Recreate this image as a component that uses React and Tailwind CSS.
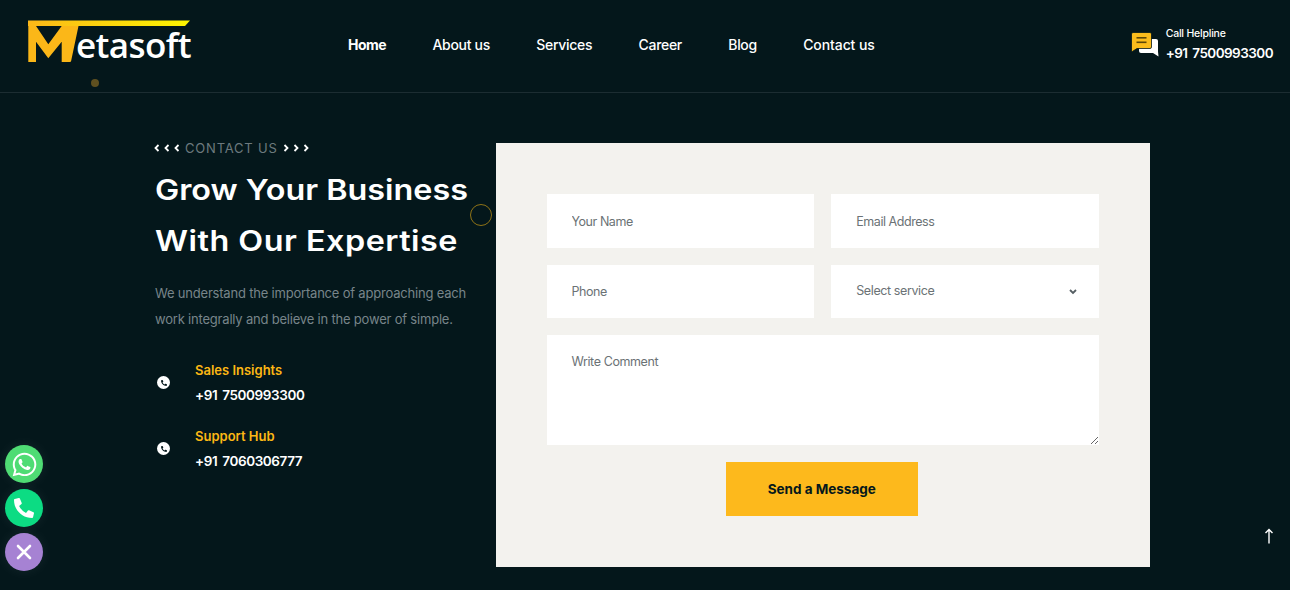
import React from "react";
import { FaWhatsapp, FaPhoneAlt } from "react-icons/fa";

const Logo = () => (
  <div className="flex items-start w-[164px] h-[44px] relative">
    <svg width="164" height="44" viewBox="0 0 164 44" className="absolute left-0 top-0">
      <defs>
        <linearGradient id="lg" x1="0" x2="1" y1="0" y2="0">
          <stop offset="0" stopColor="#fbb718" />
          <stop offset="1" stopColor="#fdf500" />
        </linearGradient>
      </defs>
      <polygon points="1,0.5 163,0.5 158,6 1,6" fill="url(#lg)" />
      <polygon points="1.3,6 9,6 21.3,24.3 34.7,6 51.5,6 44,41.5 43,42 34.7,42 34.7,21.7 21.3,38.3 9,21.7 9,42 1.3,42" fill="#fbb718" />
    </svg>
    <span className="absolute left-[49px] top-[1px] font-['Open_Sans',sans-serif] font-semibold text-white text-[35px] leading-[48px] tracking-[-0.6px]">etasoft</span>
  </div>
);

const ChatIcon = () => (
  <svg width="28" height="25" viewBox="0 0 28 25">
    <path d="M8 7h17a2 2 0 0 1 2 2v10.5l.5 5-5.5-3.5H10a2 2 0 0 1-2-2z" fill="#fff" />
    <path d="M2 0.5h17a1.5 1.5 0 0 1 1.5 1.5v13a1.5 1.5 0 0 1-1.5 1.5H6l-5.5 3.5V2A1.5 1.5 0 0 1 2 0.5z" fill="#fbbc1c" stroke="#03161c" strokeWidth="0.8" />
    <rect x="5.5" y="5" width="10" height="1.6" fill="#5c4708" />
    <rect x="5.5" y="9.5" width="10" height="1.6" fill="#5c4708" />
  </svg>
);

const Chevrons = ({ right }) => (
  <svg width="26" height="8" viewBox="0 0 26 8" className="shrink-0">
    {[0, 10, 20].map((x) => (
      <path
        key={x}
        d={right ? `M${x + 1.5} 1L${x + 4.5} 4L${x + 1.5} 7` : `M${x + 4.5} 1L${x + 1.5} 4L${x + 4.5} 7`}
        stroke="#fff"
        strokeWidth="1.8"
        fill="none"
      />
    ))}
  </svg>
);

const Contact = ({ label, phone }) => (
  <div className="flex items-center">
    <span className="ml-[2px] w-[13px] h-[13px] rounded-full bg-white flex items-center justify-center mt-[1px]">
      <FaPhoneAlt className="text-[#04171b] w-[6px] h-[6px]" />
    </span>
    <div className="ml-[25px]">
      <div className="text-[#fdb714] text-[13px] font-semibold leading-[26px]">{label}</div>
      <div className="text-white text-[13.5px] font-semibold leading-[24px] tracking-[-0.4px] [word-spacing:2px]">{phone}</div>
    </div>
  </div>
);

const inputCls = "w-full h-[53.5px] bg-white px-[25px] pt-[1px] text-[12.5px] tracking-[-0.45px] text-[#555e63] placeholder:text-[#6b7275] outline-none";

export default function App() {
  return (
    <div className="relative w-[1290px] h-[590px] overflow-hidden bg-[#04171b] font-['Inter',sans-serif]">
      <header className="h-[93px] border-b border-[#1c2d32] flex items-start">
        <div className="ml-[27px] mt-[20px]"><Logo /></div>
        <nav className="absolute left-[348px] top-[34px] flex gap-[46.3px] text-[14px] font-medium text-white leading-[21px] tracking-[-0.3px]">
          <a className="font-bold tracking-[-0.5px]">Home</a>
          <a>About us</a>
          <a>Services</a>
          <a>Career</a>
          <a>Blog</a>
          <a className="tracking-[-0.1px]">Contact us</a>
        </nav>
        <div className="ml-auto mr-[17px] mt-[25px] flex items-center">
          <ChatIcon />
          <div className="ml-[7px]">
            <div className="text-white text-[10.5px] font-medium leading-[17px] tracking-[-0.2px]">Call Helpline</div>
            <div className="text-white text-[13.5px] font-semibold leading-[22px] tracking-[-0.55px] [word-spacing:2px]">+91 7500993300</div>
          </div>
        </div>
      </header>

      <main className="flex pl-[155px] pt-[50px]">
        <section className="w-[340.5px]">
          <div className="flex items-center text-[13px] text-[#6d7a7e] tracking-[0.8px] leading-[10px] h-[10px]">
            <span className="-ml-[1px]"><Chevrons /></span>
            <span className="ml-[5px]">CONTACT US</span>
            <span className="ml-[5px]"><Chevrons right /></span>
          </div>
          <h1 className="mt-[12px] text-white font-semibold text-[28px] leading-[51px] origin-left scale-x-[1.155] w-[280px]">
            Grow Your Business<br /><span className="tracking-[0.43px]">With Our Expertise</span>
          </h1>
          <p className="mt-[13px] text-[#78858a] text-[13px] leading-[26px] tracking-[-0.2px] w-[325px]">
            We understand the importance of approaching each work integrally and believe in the power of simple.
          </p>
          <div className="mt-[25px] flex flex-col gap-[16px]">
            <Contact label="Sales Insights" phone="+91 7500993300" />
            <Contact label="Support Hub" phone="+91 7060306777" />
          </div>
        </section>

        <section className="w-[654.5px] h-[424px] bg-[#f3f2ee] p-[51px]">
          <div className="grid grid-cols-2 gap-[17px]">
            <input className={inputCls} placeholder="Your Name" />
            <input className={inputCls} placeholder="Email Address" />
            <input className={inputCls} placeholder="Phone" />
            <div className="relative">
              <select className="appearance-none w-full h-[53.5px] bg-white pl-[25px] pr-[16px] pt-[1px] text-[12.5px] tracking-[-0.4px] text-[#6b7275] outline-none" defaultValue="">
                <option value="">Select service</option>
              </select>
              <svg className="absolute left-[238px] top-[24px]" width="8" height="6" viewBox="0 0 8 6">
                <path d="M1 1l3 3 3-3" stroke="#555e63" strokeWidth="1.8" fill="none" />
              </svg>
            </div>
            <textarea className="col-span-2 h-[110px] bg-white px-[25px] pt-[18px] pb-[16px] text-[12.5px] tracking-[-0.4px] block placeholder:text-[#6b7275] outline-none" placeholder="Write Comment" />
          </div>
          <div className="flex justify-center mt-[17px] pr-[2px]">
            <button className="w-[192px] h-[54px] bg-[#fdb91c] text-[#04171b] text-[13.5px] font-bold">Send a Message</button>
          </div>
        </section>
      </main>

      <span className="absolute left-[91px] top-[79px] w-[8px] h-[8px] rounded-full bg-[#5f5020]" />
      <span className="absolute left-[470px] top-[204px] w-[22px] h-[22px] rounded-full border-[1.5px] border-[#8f7317]" />

      <div className="absolute left-[5px] top-[445px] flex flex-col gap-[6px]">
        <span className="w-[38px] h-[38px] rounded-full bg-[#4fdc74] flex items-center justify-center text-white shadow-[0_0_14px_rgba(255,255,255,0.07)]"><FaWhatsapp className="w-[27px] h-[27px]" /></span>
        <span className="w-[38px] h-[38px] rounded-full bg-[#0cdc83] flex items-center justify-center text-white shadow-[0_0_14px_rgba(255,255,255,0.07)]"><FaPhoneAlt className="w-[20px] h-[20px]" /></span>
        <span className="w-[38px] h-[38px] rounded-full bg-[#a682d3] flex items-center justify-center text-white shadow-[0_0_14px_rgba(255,255,255,0.07)]">
          <svg width="18" height="18" viewBox="0 0 18 18"><path d="M3 3l12 12M15 3L3 15" stroke="#fff" strokeWidth="2.6" strokeLinecap="round" /></svg>
        </span>
      </div>

      <svg className="absolute left-[1263px] top-[528px]" width="12" height="16" viewBox="0 0 12 16">
        <path d="M6 15.5V1.5M2.5 5L6 1.5 9.5 5" stroke="#fff" strokeWidth="1.4" fill="none" />
      </svg>
    </div>
  );
}
